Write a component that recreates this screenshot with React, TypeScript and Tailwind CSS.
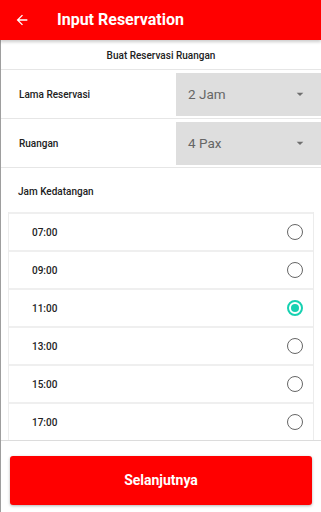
import { ReactNode } from "react";

const times = ["07:00", "09:00", "11:00", "13:00", "15:00", "17:00"];
const selected = "11:00";

function Caret() {
    return (
        <svg width="16" height="16" viewBox="0 0 24 24" className="text-[#6f6f6f]">
            <path d="M7 10l5 5 5-5z" fill="currentColor" />
        </svg>
    );
}

function Radio({ checked }: { checked: boolean }) {
    if (checked) {
        return (
            <div className="flex h-[16px] w-[16px] items-center justify-center rounded-full border-2 border-[#17d1b1]">
                <div className="h-[8px] w-[8px] rounded-full bg-[#17d1b1]" />
            </div>
        );
    }
    return <div className="h-[16px] w-[16px] rounded-full border-[1.5px] border-[#666]" />;
}

function SelectRow({ label, value }: { label: string; value: ReactNode }) {
    return (
        <div className="flex h-[49px] items-center border-b border-[#e6e6e6]">
            <div className="flex-1 pl-[18px] text-[10px] font-medium text-[#222]">{label}</div>
            <div className="flex h-[43px] w-[145px] items-center justify-between bg-[#dedede] pl-[12px] pr-[13px]">
                <span className="text-[13.5px] text-[#666]">{value}</span>
                <Caret />
            </div>
        </div>
    );
}

export default function App() {
    return (
        <div
            className="flex h-[512px] w-[321px] flex-col overflow-hidden bg-white"
            style={{ fontFamily: "Roboto, 'Noto Sans', sans-serif" }}
        >
            {/* Toolbar */}
            <div className="relative z-10 flex h-[40px] shrink-0 items-center bg-[#ff0000] shadow-[0_2px_3px_rgba(0,0,0,0.2)]">
                <svg width="16" height="16" viewBox="0 0 24 24" className="ml-[14px] text-white">
                    <path d="M20 11H7.83l5.59-5.59L12 4l-8 8 8 8 1.41-1.41L7.83 13H20v-2z" fill="currentColor" />
                </svg>
                <h1 className="ml-[27px] text-[16px] font-bold text-white">Input Reservation</h1>
            </div>

            <div className="flex flex-1 flex-col border-l border-[#9e9e9e]">
                <div className="flex h-[30px] items-center justify-center border-b border-[#e6e6e6] pt-[1px] text-[10px] font-medium text-[#222]">
                    Buat Reservasi Ruangan
                </div>

                <SelectRow label="Lama Reservasi" value="2 Jam" />
                <SelectRow label="Ruangan" value="4 Pax" />

                <div className="flex h-[44px] items-center pl-[17px] pt-[2px] text-[10px] font-medium text-[#222]">
                    Jam Kedatangan
                </div>

                <div className="mx-[7px] flex flex-col border-x border-[#ececec]">
                    {times.map((t) => (
                        <div
                            key={t}
                            className="flex h-[38px] items-center justify-between border-t-2 border-[#efefef] pl-[23px] pr-[10px]"
                        >
                            <span className="text-[10px] font-medium text-[#222]">{t}</span>
                            <Radio checked={t === selected} />
                        </div>
                    ))}
                </div>

                <div className="border-t border-[#dcdcdc] px-[9px] pt-[15px]">
                    <button className="flex h-[49px] w-full items-center justify-center rounded-[3px] bg-[#ff0000] text-[14px] font-bold text-white shadow-[0_1px_3px_rgba(0,0,0,0.3)]">
                        Selanjutnya
                    </button>
                </div>
            </div>
        </div>
    );
}
